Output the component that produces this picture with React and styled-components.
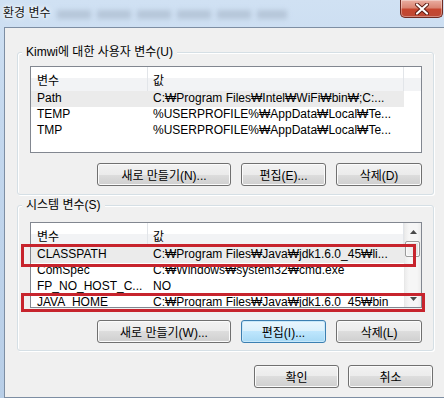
import React from "react";
import styled, { createGlobalStyle } from "styled-components";

const GlobalStyle = createGlobalStyle`
  html, body { margin: 0; padding: 0; background: #c7daef; }
  body {
    font-family: "Liberation Sans", "Noto Sans", "Noto Sans CJK KR", sans-serif;
    font-size: 12px;
    color: #000;
  }
  * { box-sizing: border-box; }
`;

const Window = styled.div`
  position: relative;
  width: 444px;
  height: 398px;
  overflow: hidden;
  display: flex;
  flex-direction: column;
  background: linear-gradient(180deg, #d0e1f3 0%, #c4d8ee 30%, #b8cee7 100%);
`;

const TitleBar = styled.div`
  height: 27px;
  flex: none;
  display: flex;
  align-items: flex-start;
  padding: 0 1px 0 3px;
`;

const Title = styled.span`
  margin-top: 6px;
  line-height: 15px;
  color: #141414;
  white-space: nowrap;
  text-shadow: 0 0 6px #ffffff, 0 0 3px #ffffff;
`;

const Blurred = styled.div`
  margin: 10px 0 0 6px;
  width: 230px;
  height: 9px;
  background: repeating-linear-gradient(
    90deg,
    #a9b9cc 0 34px,
    transparent 34px 40px
  );
  filter: blur(2.5px);
  opacity: 0.65;
`;

const CloseButton = styled.div`
  margin-left: auto;
  width: 43px;
  height: 18px;
  border: 1px solid #6f2a22;
  border-top: none;
  border-radius: 0 0 5px 5px;
  background: linear-gradient(
    180deg,
    #eaaea1 0%,
    #da8573 45%,
    #c6462f 55%,
    #bd4a36 100%
  );
  box-shadow: inset 0 0 0 1px rgba(255, 255, 255, 0.35);
  display: flex;
  align-items: center;
  justify-content: center;
`;

const Body = styled.div`
  height: 371px;
  margin-left: 4px;
  background: #f0f0f0;
  border: 1px solid #7d8ea3;
  border-right: none;
  padding: 0 10px 0 12px;
  display: flex;
  flex-direction: column;
`;

const GroupBox = styled.div`
  position: relative;
  margin-top: ${(p) => p.$mt}px;
  border: 1px solid #d5dfe5;
  border-radius: 3px;
  padding: ${(p) => p.$pt}px 11px ${(p) => p.$pb}px 12px;
  box-shadow: inset 1px 1px 0 #ffffff, 1px 1px 0 #ffffff;
  display: flex;
  flex-direction: column;
  gap: ${(p) => p.$gap}px;
`;

const GroupLabel = styled.span`
  position: absolute;
  top: -8px;
  left: 4px;
  padding: 0 4px;
  background: #f0f0f0;
  line-height: 15px;
  white-space: nowrap;
`;

const ListView = styled.div`
  height: ${(p) => p.$h}px;
  border: 1px solid #828790;
  background: #ffffff;
  display: flex;
  overflow: hidden;
`;

const ListMain = styled.div`
  flex: 1;
  min-width: 0;
  display: flex;
  flex-direction: column;
`;

const HeaderRow = styled.div`
  height: 24px;
  flex: none;
  display: flex;
  background: linear-gradient(180deg, #ffffff 0 45%, #f2f3f5 45% 100%);
`;

const HeaderCell = styled.div`
  width: ${(p) => p.$w}px;
  flex: none;
  padding-left: ${(p) => p.$pl}px;
  border-right: 1px solid #e2e5e9;
  display: flex;
  align-items: center;
  white-space: nowrap;
`;

const Row = styled.div`
  height: 16px;
  flex: none;
  display: flex;
  align-self: flex-start;
  background: ${(p) => (p.$selected ? "#ebebeb" : "transparent")};
`;

const Cell = styled.div`
  width: ${(p) => p.$w}px;
  flex: none;
  padding-left: ${(p) => p.$pl}px;
  line-height: 15px;
  white-space: nowrap;
  overflow: hidden;
`;

const ScrollBar = styled.div`
  width: 17px;
  flex: none;
  display: flex;
  flex-direction: column;
  border-left: 1px solid #e8e8e8;
  background: linear-gradient(90deg, #ececec, #f6f6f6 25%, #f6f6f6 75%, #ececec);
`;

const ScrollArrow = styled.div`
  height: 17px;
  flex: none;
  display: flex;
  align-items: center;
  justify-content: center;
`;

const ScrollTrack = styled.div`
  flex: 1;
  display: flex;
  flex-direction: column;
`;

const Thumb = styled.div`
  margin: 1px 1px 0 0;
  height: 16px;
  border: 1px solid #9a9a9a;
  border-radius: 2px;
  background: linear-gradient(90deg, #f4f4f4, #e2e2e2);
  box-shadow: inset 0 0 0 1px #fafafa;
`;

const ButtonRow = styled.div`
  display: flex;
  justify-content: flex-end;
  gap: ${(p) => p.$gap}px;
  padding-right: ${(p) => p.$pr || 0}px;
  margin-top: ${(p) => p.$mt || 0}px;
`;

const Button = styled.button`
  width: ${(p) => p.$w}px;
  height: 23px;
  padding: 0;
  font: inherit;
  color: #000;
  border: 1px solid ${(p) => (p.$focused ? "#3c7fb1" : "#707070")};
  border-radius: 3px;
  background: ${(p) =>
    p.$focused
      ? "linear-gradient(180deg, #eaf6fd 0%, #d9f0fc 50%, #bee6fd 50%, #a7d9f5 100%)"
      : "linear-gradient(180deg, #f2f2f2 0%, #ebebeb 50%, #dddddd 50%, #cfcfcf 100%)"};
  box-shadow: inset 0 0 0 1px ${(p) => (p.$focused ? "#c8e8fa" : "#fbfbfb")};
  display: flex;
  align-items: center;
  justify-content: center;
  white-space: nowrap;
`;

const Annotation = styled.div`
  position: absolute;
  left: ${(p) => p.$x}px;
  top: ${(p) => p.$y}px;
  width: ${(p) => p.$w}px;
  height: ${(p) => p.$h}px;
  border: 3px solid #c7242d;
  pointer-events: none;
`;

const COL1 = 117;
const COL2 = 256;

function List({ height, rows, scroll }) {
  return (
    <ListView $h={height}>
      <ListMain>
        <HeaderRow>
          <HeaderCell $w={COL1} $pl={6}>변수</HeaderCell>
          <HeaderCell $w={COL2} $pl={5}>값</HeaderCell>
        </HeaderRow>
        {rows.map((r, i) => (
          <Row key={i} $selected={i === 0}>
            <Cell $w={COL1} $pl={6}>{r[0]}</Cell>
            <Cell $w={COL2} $pl={5}>{r[1]}</Cell>
          </Row>
        ))}
      </ListMain>
      {scroll && (
        <ScrollBar>
          <ScrollArrow>
            <svg width="7" height="4" viewBox="0 0 7 4">
              <path d="M0 4 L3.5 0 L7 4 Z" fill="#4a4a4a" />
            </svg>
          </ScrollArrow>
          <ScrollTrack>
            <Thumb />
          </ScrollTrack>
          <ScrollArrow>
            <svg width="7" height="4" viewBox="0 0 7 4">
              <path d="M0 0 L7 0 L3.5 4 Z" fill="#4a4a4a" />
            </svg>
          </ScrollArrow>
        </ScrollBar>
      )}
    </ListView>
  );
}

const userRows = [
  ["Path", "C:₩Program Files₩Intel₩WiFi₩bin₩;C:..."],
  ["TEMP", "%USERPROFILE%₩AppData₩Local₩Te..."],
  ["TMP", "%USERPROFILE%₩AppData₩Local₩Te..."],
];

const systemRows = [
  ["CLASSPATH", "C:₩Program Files₩Java₩jdk1.6.0_45₩li..."],
  ["ComSpec", "C:₩Windows₩system32₩cmd.exe"],
  ["FP_NO_HOST_C...", "NO"],
  ["JAVA_HOME", "C:₩Program Files₩Java₩jdk1.6.0_45₩bin"],
];

export default function App() {
  return (
    <>
      <GlobalStyle />
      <Window>
        <TitleBar>
          <Title>환경 변수</Title>
          <Blurred />
          <CloseButton>
            <svg width="14" height="12" viewBox="0 0 14 12">
              <path
                d="M2 1.5 L12 10.5 M12 1.5 L2 10.5"
                stroke="#5a1a12"
                strokeWidth="4"
                strokeLinecap="round"
              />
              <path
                d="M2 1.5 L12 10.5 M12 1.5 L2 10.5"
                stroke="#ffffff"
                strokeWidth="2.2"
                strokeLinecap="round"
              />
            </svg>
          </CloseButton>
        </TitleBar>
        <Body>
          <GroupBox $mt={24} $pt={13} $pb={8} $gap={10}>
            <GroupLabel>Kimwi에 대한 사용자 변수(U)</GroupLabel>
            <List height={87} rows={userRows} />
            <ButtonRow $gap={10}>
              <Button $w={134}>새로 만들기(N)...</Button>
              <Button $w={85}>편집(E)...</Button>
              <Button $w={86}>삭제(D)</Button>
            </ButtonRow>
          </GroupBox>
          <GroupBox $mt={10} $pt={16} $pb={7} $gap={12}>
            <GroupLabel>시스템 변수(S)</GroupLabel>
            <List height={86} rows={systemRows} scroll />
            <ButtonRow $gap={10}>
              <Button $w={134}>새로 만들기(W)...</Button>
              <Button $w={85} $focused>
                편집(I)...
              </Button>
              <Button $w={86}>삭제(L)</Button>
            </ButtonRow>
          </GroupBox>
          <ButtonRow $gap={9} $pr={1} $mt={14}>
            <Button $w={85}>확인</Button>
            <Button $w={85}>취소</Button>
          </ButtonRow>
        </Body>
        <Annotation $x={21} $y={244} $w={395} $h={23} />
        <Annotation $x={21} $y={293} $w={404} $h={19} />
      </Window>
    </>
  );
}
